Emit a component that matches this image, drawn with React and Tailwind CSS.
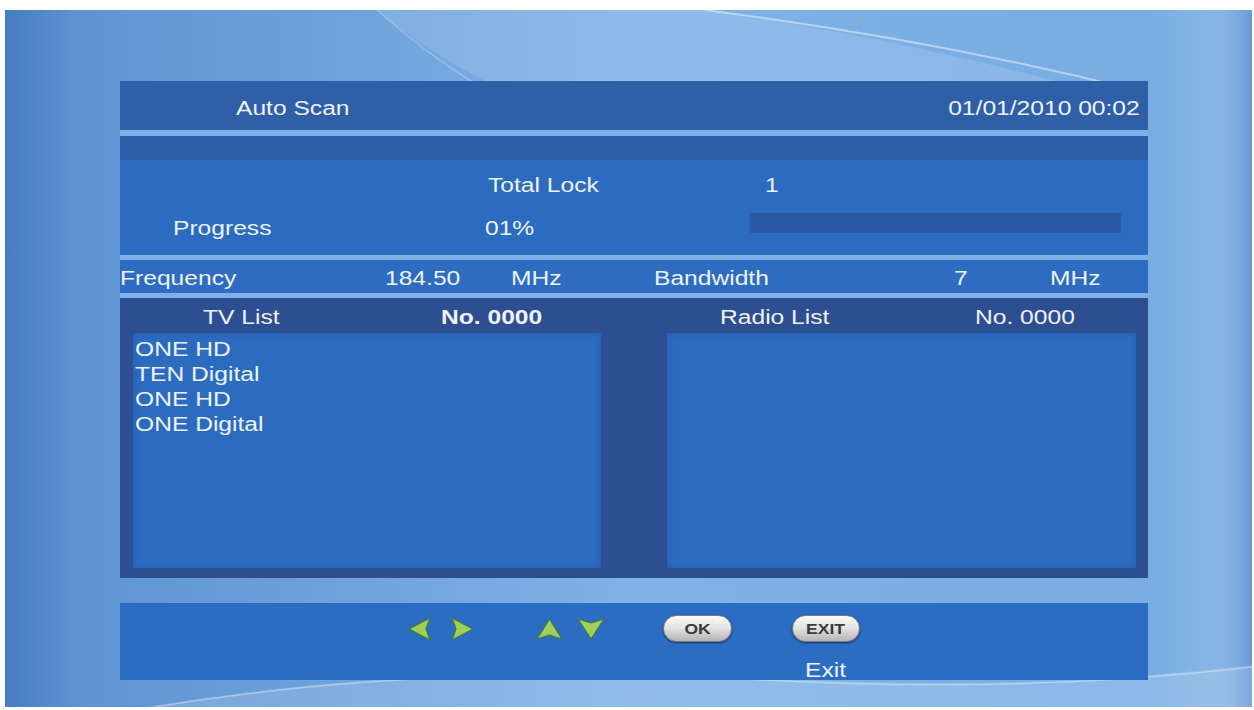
import React from "react";

// stretched TV-style label
const T = ({ children, className = "", origin = "origin-left" }) => (
  <span
    className={`inline-block ${origin} scale-x-[1.23] whitespace-nowrap ${className}`}
  >
    {children}
  </span>
);

const Line = () => <div className="h-[6px] bg-[#7db1e7]" />;

const Arrow = ({ dir }) => {
  const paths = {
    left: "M1 12 L22 1 L18 12 L22 23 Z",
    right: "M23 12 L2 1 L6 12 L2 23 Z",
    up: "M13.5 1 L26 21 L13.5 17 L1 21 Z",
    down: "M14 21 L27 1 L14 5 L1 1 Z",
  };
  const size = {
    left: [24, 24],
    right: [24, 24],
    up: [27, 22],
    down: [28, 22],
  }[dir];
  return (
    <svg width={size[0]} height={size[1]} viewBox={`0 0 ${size[0]} ${size[1]}`}>
      <path
        d={paths[dir]}
        fill="#9fcf58"
        stroke="#3f7a42"
        strokeWidth="1.2"
        strokeLinejoin="round"
      />
    </svg>
  );
};

const Pill = ({ label, w }) => (
  <div
    className={`${w} h-[27px] shrink-0 rounded-full border border-[#7d7d7d] bg-gradient-to-b from-[#fbfbfb] via-[#e2e2e2] to-[#b4b4b4] shadow-[0_1px_2px_rgba(0,0,0,0.55)] flex items-center justify-center`}
  >
    <span className="inline-block origin-center scale-x-[1.25] text-[14px] font-bold text-[#3b3b3b] leading-none">
      {label}
    </span>
  </div>
);

const Background = () => (
  <svg
    className="absolute inset-0 w-full h-full"
    viewBox="0 0 1247 697"
    preserveAspectRatio="none"
  >
    <defs>
      <linearGradient id="leftEdge" x1="0" x2="1" y1="0" y2="0">
        <stop offset="0" stopColor="#3f76bb" stopOpacity="0.7" />
        <stop offset="1" stopColor="#3f76bb" stopOpacity="0" />
      </linearGradient>
      <linearGradient id="rightEdge" x1="0" x2="1" y1="0" y2="0">
        <stop offset="0" stopColor="#ffffff" stopOpacity="0" />
        <stop offset="0.6" stopColor="#ffffff" stopOpacity="0.1" />
        <stop offset="1" stopColor="#3f76bb" stopOpacity="0.35" />
      </linearGradient>
    </defs>
    <rect x="0" y="0" width="70" height="697" fill="url(#leftEdge)" />
    <rect x="1140" y="0" width="107" height="697" fill="url(#rightEdge)" />
    <path
      d="M372 0 L700 0 Q 930 35 1120 90 L 520 90 Q 430 50 372 0 Z"
      fill="#ffffff"
      opacity="0.12"
    />
    <path
      d="M700 0 Q 930 30 1130 80"
      stroke="#ffffff"
      strokeWidth="2"
      fill="none"
      opacity="0.45"
    />
    <path
      d="M372 0 Q 440 60 500 90"
      stroke="#ffffff"
      strokeWidth="1.5"
      fill="none"
      opacity="0.25"
    />
    <path
      d="M140 697 Q 420 650 760 668 Q 1020 682 1247 655 L1247 697 Z"
      fill="#ffffff"
      opacity="0.14"
    />
    <path
      d="M150 697 Q 420 652 760 670 Q 1020 684 1247 657"
      stroke="#ffffff"
      strokeWidth="1.5"
      fill="none"
      opacity="0.35"
    />
  </svg>
);

export default function App() {
  const tv = ["ONE HD", "TEN Digital", "ONE HD", "ONE Digital"];

  return (
    <div className="w-[1254px] h-[710px] bg-white pt-[10px] pl-[5px] pr-[2px] pb-[3px] font-[Liberation_Sans,Arial,sans-serif] text-[20px] text-[#eef3fb]">
      <div className="relative h-full overflow-hidden bg-gradient-to-r from-[#5a90d0] via-[#7fb2e6] to-[#78ace2]">
        <Background />

        <div className="relative pt-[71px] pl-[115px]">
          <div className="w-[1028px] flex flex-col">
            {/* header */}
            <div className="h-[49px] bg-[#2e5fa7] flex items-center justify-between pl-[116px] pr-[8px] pt-[5px]">
              <T>Auto Scan</T>
              <T origin="origin-right">01/01/2010 00:02</T>
            </div>
            <Line />
            <div className="h-[24px] bg-[#2b5ea9]" />

            {/* progress */}
            <div className="h-[95px] bg-[#2b6cc0] flex flex-col">
              <div className="h-[48px] flex items-center pt-[2px]">
                <div className="w-[368px] shrink-0" />
                <div className="w-[277px] shrink-0">
                  <T>Total Lock</T>
                </div>
                <T>1</T>
              </div>
              <div className="h-[38px] flex items-center pt-[2px]">
                <div className="w-[53px] shrink-0" />
                <div className="w-[312px] shrink-0">
                  <T>Progress</T>
                </div>
                <div className="w-[265px] shrink-0">
                  <T>01%</T>
                </div>
                <div className="self-start mt-[3px] w-[371px] h-[20px] bg-[#2a5aa4]" />
              </div>
            </div>
            <div className="h-[5px] bg-[#7db1e7]" />

            {/* frequency */}
            <div className="h-[33px] bg-[#2d6cc0] flex items-center pt-[3px]">
              <div className="w-[265px] shrink-0">
                <T>Frequency</T>
              </div>
              <div className="w-[126px] shrink-0">
                <T>184.50</T>
              </div>
              <div className="w-[143px] shrink-0">
                <T>MHz</T>
              </div>
              <div className="w-[300px] shrink-0">
                <T>Bandwidth</T>
              </div>
              <div className="w-[96px] shrink-0">
                <T>7</T>
              </div>
              <T>MHz</T>
            </div>
            <div className="h-[5px] bg-[#7db1e7]" />

            {/* lists */}
            <div className="h-[280px] bg-[#2e4e92] flex flex-col">
              <div className="h-[35px] flex items-center pt-[2px]">
                <div className="w-[83px] shrink-0" />
                <div className="w-[238px] shrink-0">
                  <T>TV List</T>
                </div>
                <div className="w-[279px] shrink-0">
                  <T className="font-bold">No. 0000</T>
                </div>
                <div className="w-[255px] shrink-0">
                  <T>Radio List</T>
                </div>
                <T>No. 0000</T>
              </div>
              <div className="flex pl-[13px] gap-[66px]">
                <div className="w-[468px] h-[235px] bg-[#2b6cc1] shadow-[inset_0_0_6px_rgba(30,60,130,0.35)] pt-[4px] pl-[2px] leading-[25px]">
                  {tv.map((name, i) => (
                    <div key={i}>
                      <T>{name}</T>
                    </div>
                  ))}
                </div>
                <div className="w-[469px] h-[235px] bg-[#2b6cc1] shadow-[inset_0_0_6px_rgba(30,60,130,0.35)]" />
              </div>
            </div>

            <div className="h-[25px]" />

            {/* bottom help bar */}
            <div className="h-[77px] bg-[#2b6dc2] flex flex-col">
              <div className="pt-[12px] flex items-center h-[39px]">
                <div className="ml-[288px]">
                  <Arrow dir="left" />
                </div>
                <div className="ml-[18px]">
                  <Arrow dir="right" />
                </div>
                <div className="ml-[62px]">
                  <Arrow dir="up" />
                </div>
                <div className="ml-[14px]">
                  <Arrow dir="down" />
                </div>
                <div className="ml-[58px]">
                  <Pill label="OK" w="w-[69px]" />
                </div>
                <div className="ml-[60px]">
                  <Pill label="EXIT" w="w-[68px]" />
                </div>
              </div>
              <div className="pt-[16px] pl-[685px] leading-[24px]">
                <T>Exit</T>
              </div>
            </div>
          </div>
        </div>
      </div>
    </div>
  );
}
